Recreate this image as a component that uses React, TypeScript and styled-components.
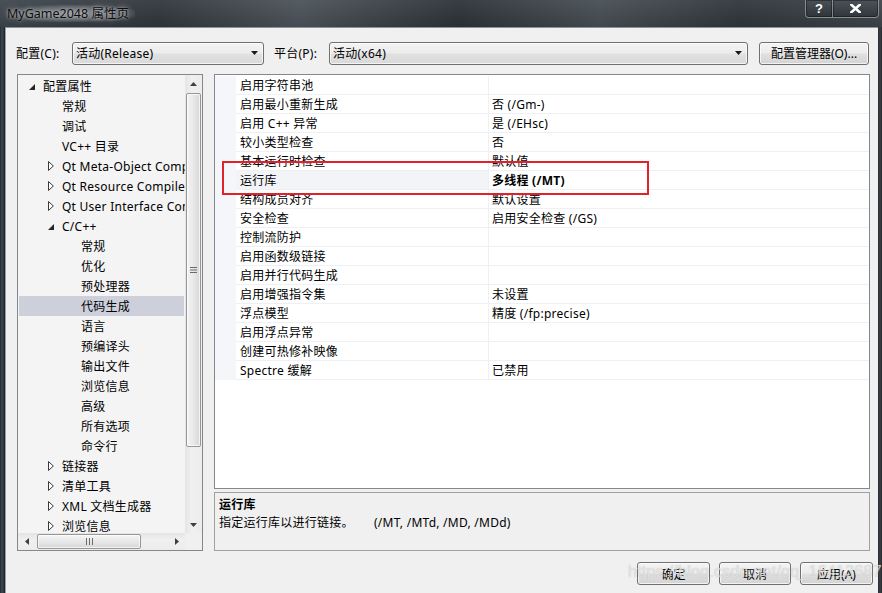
import React from "react";
import styled, { createGlobalStyle } from "styled-components";

const FONT = `"Noto Sans", "Noto Sans CJK SC", sans-serif`;

const GlobalStyle = createGlobalStyle`
  html, body { margin: 0; padding: 0; background: #2a2f34; }
  body { font-family: ${FONT}; font-size: 12px; color: #000; letter-spacing: 0.25px; }
  * { box-sizing: border-box; }
`;

const Window = styled.div`
  position: relative;
  width: 882px;
  height: 593px;
  overflow: hidden;
  display: flex;
  flex-direction: column;
  background: linear-gradient(90deg, #23282c 0px, #3c4c5a 2px, #1d2125 5px, #1d2125 877px, #3a4046 880px, #262a2e 882px);
`;

const TitleBar = styled.div`
  height: 27px;
  flex: 0 0 27px;
  display: flex;
  align-items: flex-start;
  background:
    linear-gradient(180deg, rgba(255,255,255,0.06), rgba(0,0,0,0.08)),
    linear-gradient(90deg, #3e454c 0%, #30363c 18%, #4b5259 34%, #2c3237 52%, #464d54 68%, #2f353a 84%, #3d444a 100%);
`;

const Title = styled.div`
  margin: 5px 0 0 7px;
  padding: 0 6px 0 0;
  font-size: 12.5px;
  letter-spacing: 0;
  line-height: 17px;
  color: #0c0c0c;
  background: radial-gradient(ellipse at center, rgba(190,196,201,0.55) 0%, rgba(150,158,164,0.35) 55%, rgba(120,128,134,0) 80%);
  text-shadow: 0 0 6px rgba(255,255,255,0.55), 0 0 3px rgba(255,255,255,0.45);
`;

const CaptionButtons = styled.div`
  margin-left: auto;
  margin-right: 3px;
  display: flex;
`;

const CaptionButton = styled.div<{ $w: number; $first?: boolean }>`
  width: ${(p) => p.$w}px;
  height: 18px;
  display: flex;
  align-items: center;
  justify-content: center;
  border: 1px solid rgba(190, 198, 206, 0.55);
  border-top: none;
  border-left: ${(p) => (p.$first ? "1px solid rgba(190,198,206,0.55)" : "none")};
  border-radius: ${(p) => (p.$first ? "0 0 0 4px" : "0 0 4px 0")};
  background: linear-gradient(180deg, rgba(80,88,96,0.55), rgba(40,46,52,0.6));
  box-shadow: inset 0 0 0 1px rgba(0,0,0,0.35);
  color: #fff;
  font-family: "Liberation Sans", sans-serif;
  font-weight: bold;
  font-size: 13px;
  line-height: 1;
`;

const Client = styled.div`
  flex: 1;
  margin: 0 4px 0 5px;
  background: #f0f0f0;
  border-top: 1px solid #8a9197;
  border-left: 1px solid #9aa0a6;
  display: flex;
  flex-direction: column;
`;

const TopRow = styled.div`
  display: flex;
  align-items: center;
  padding: 13px 0 0 10px;
  height: 37px;
`;

const Label = styled.div<{ $w: number; $ml?: number }>`
  width: ${(p) => p.$w}px;
  margin-left: ${(p) => p.$ml ?? 0}px;
  line-height: 23px;
`;

const Combo = styled.div<{ $w: number }>`
  width: ${(p) => p.$w}px;
  height: 23px;
  display: flex;
  align-items: center;
  padding: 0 0 0 3px;
  border: 1px solid #707070;
  border-radius: 3px;
  background: linear-gradient(180deg, #f4f4f4 0%, #ececec 48%, #e1e1e1 52%, #d9d9d9 100%);
  box-shadow: inset 0 0 0 1px rgba(255,255,255,0.7);
`;

const ComboText = styled.div`
  flex: 1;
  white-space: nowrap;
  overflow: hidden;
`;

const ComboArrow = styled.div`
  width: 18px;
  display: flex;
  justify-content: center;
`;

const WinButton = styled.div<{ $w: number; $ml?: number }>`
  width: ${(p) => p.$w}px;
  margin-left: ${(p) => p.$ml ?? 0}px;
  height: 23px;
  display: flex;
  align-items: center;
  justify-content: center;
  border: 1px solid #707070;
  border-radius: 3px;
  background: linear-gradient(180deg, #f4f4f4 0%, #ececec 48%, #e0e0e0 52%, #d4d4d4 100%);
  box-shadow: inset 0 0 0 1px rgba(255,255,255,0.7);
  white-space: nowrap;
  letter-spacing: 0;
`;

const Main = styled.div`
  display: flex;
  margin-top: 9px;
  padding-left: 11px;
  height: 477px;
`;

const Tree = styled.div`
  width: 186px;
  height: 477px;
  border: 1px solid #828790;
  background: #f4f4f4;
  display: grid;
  grid-template-columns: 1fr 17px;
  grid-template-rows: 1fr 17px;
`;

const TreeList = styled.div`
  overflow: hidden;
  padding-top: 1px;
`;

const TreeRow = styled.div<{ $level: number; $selected?: boolean }>`
  height: 20px;
  margin: 0 1px;
  display: flex;
  align-items: center;
  padding-left: ${(p) => 7 + p.$level * 19}px;
  white-space: nowrap;
  background: ${(p) => (p.$selected ? "#cdd0db" : "transparent")};
`;

const Expander = styled.div`
  width: 17px;
  flex: 0 0 17px;
  display: flex;
  align-items: center;
  padding-left: 3px;
  height: 20px;
`;

const VScroll = styled.div`
  display: flex;
  flex-direction: column;
  background: linear-gradient(90deg, #e4e4e4, #f0f0f0 40%, #ececec);
`;

const HScroll = styled.div`
  display: flex;
  background: linear-gradient(180deg, #e4e4e4, #f0f0f0 40%, #ececec);
`;

const Corner = styled.div`
  background: #f0f0f0;
`;

const ScrollArrow = styled.div`
  width: 17px;
  height: 17px;
  flex: 0 0 17px;
  display: flex;
  align-items: center;
  justify-content: center;
`;

const VThumb = styled.div`
  margin: 1px 1px 0 1px;
  height: 354px;
  border: 1px solid #979797;
  border-radius: 2px;
  background: linear-gradient(90deg, #f4f4f4 0%, #e8e8e8 50%, #d6d6d6 100%);
  box-shadow: inset 0 0 0 1px rgba(255,255,255,0.7);
  display: flex;
  align-items: center;
  justify-content: center;
`;

const HThumb = styled.div`
  margin: 1px 0 1px 2px;
  width: 104px;
  border: 1px solid #979797;
  border-radius: 2px;
  background: linear-gradient(180deg, #f4f4f4 0%, #e8e8e8 50%, #d6d6d6 100%);
  box-shadow: inset 0 0 0 1px rgba(255,255,255,0.7);
  display: flex;
  align-items: center;
  justify-content: center;
`;

const Spacer = styled.div`
  flex: 1;
`;

const RightCol = styled.div`
  margin-left: 11px;
  width: 656px;
  display: flex;
  flex-direction: column;
  gap: 3px;
`;

const Grid = styled.div`
  position: relative;
  height: 415px;
  padding-top: 1px;
  border: 1px solid #828790;
  background: #fff;
`;

const PropRow = styled.div`
  display: grid;
  grid-template-columns: 21px 253px 1fr;
  height: 19px;
`;

const Gutter = styled.div`
  background: #f4f6f9;
`;

const NameCell = styled.div<{ $selected?: boolean }>`
  padding: 1px 0 0 4px;
  line-height: 17px;
  border-right: 1px solid #eef0f4;
  border-bottom: 1px solid #eef0f4;
  background: ${(p) => (p.$selected ? "#f2f4f8" : "#fff")};
  white-space: nowrap;
  overflow: hidden;
`;

const ValueCell = styled.div<{ $bold?: boolean }>`
  padding: 1px 0 0 3px;
  line-height: 17px;
  border-bottom: 1px solid #eef0f4;
  font-weight: ${(p) => (p.$bold ? "bold" : "normal")};
  white-space: nowrap;
  overflow: hidden;
`;

const Highlight = styled.div`
  position: absolute;
  left: 7px;
  top: 86px;
  width: 427px;
  height: 34px;
  border: 2px solid #e2222b;
  pointer-events: none;
`;

const Desc = styled.div`
  height: 59px;
  border: 1px solid #a0a0a0;
  background: #f0f0f0;
  padding: 3px 4px;
`;

const DescTitle = styled.div`
  font-weight: bold;
  line-height: 18px;
`;

const DescText = styled.div`
  line-height: 18px;
  white-space: pre;
`;

const ButtonRow = styled.div`
  display: flex;
  justify-content: flex-end;
  gap: 9px;
  padding: 11px 5px 0 0;
`;

const Watermark = styled.div`
  position: absolute;
  left: 628px;
  top: 563px;
  font-family: "Liberation Sans", sans-serif;
  font-size: 16px;
  color: rgba(240, 240, 240, 0.7);
  text-shadow: 0 0 1px rgba(140,140,140,0.5);
  pointer-events: none;
  white-space: nowrap;
`;

const DownTri = ({ c = "#1a1a1a" }: { c?: string }) => (
  <svg width="7" height="4" viewBox="0 0 7 4"><polygon points="0,0 7,0 3.5,4" fill={c} /></svg>
);
const UpTri = () => (
  <svg width="7" height="4" viewBox="0 0 7 4"><polygon points="0,4 7,4 3.5,0" fill="#404040" /></svg>
);
const LeftTri = () => (
  <svg width="4" height="7" viewBox="0 0 4 7"><polygon points="4,0 4,7 0,3.5" fill="#404040" /></svg>
);
const RightTri = () => (
  <svg width="4" height="7" viewBox="0 0 4 7"><polygon points="0,0 0,7 4,3.5" fill="#404040" /></svg>
);
const Expanded = () => (
  <svg width="6" height="6" viewBox="0 0 6 6" style={{ marginTop: 2 }}><polygon points="6,0 6,6 0,6" fill="#262626" /></svg>
);
const Collapsed = () => (
  <svg width="6" height="10" viewBox="0 0 6 10"><polygon points="0.5,0.5 5.3,5 0.5,9.5" fill="#fff" stroke="#3a3a3a" strokeWidth="1" /></svg>
);
const VGrip = () => (
  <svg width="7" height="6" viewBox="0 0 7 6">
    <rect x="0" y="0" width="7" height="1" fill="#6a6a6a" />
    <rect x="0" y="2.5" width="7" height="1" fill="#6a6a6a" />
    <rect x="0" y="5" width="7" height="1" fill="#6a6a6a" />
  </svg>
);
const HGrip = () => (
  <svg width="7" height="7" viewBox="0 0 7 7">
    <rect x="0" y="0" width="1" height="7" fill="#6a6a6a" />
    <rect x="3" y="0" width="1" height="7" fill="#6a6a6a" />
    <rect x="6" y="0" width="1" height="7" fill="#6a6a6a" />
  </svg>
);
const CloseX = () => (
  <svg width="11" height="9" viewBox="0 0 11 9">
    <path d="M1 0.5 L10 8.5 M10 0.5 L1 8.5" stroke="#fff" strokeWidth="2.6" strokeLinecap="square" />
  </svg>
);

type TreeItem = { level: number; text: string; arrow?: "open" | "closed"; selected?: boolean };

const treeItems: TreeItem[] = [
  { level: 0, text: "配置属性", arrow: "open" },
  { level: 1, text: "常规" },
  { level: 1, text: "调试" },
  { level: 1, text: "VC++ 目录" },
  { level: 1, text: "Qt Meta-Object Compiler", arrow: "closed" },
  { level: 1, text: "Qt Resource Compiler", arrow: "closed" },
  { level: 1, text: "Qt User Interface Compiler", arrow: "closed" },
  { level: 1, text: "C/C++", arrow: "open" },
  { level: 2, text: "常规" },
  { level: 2, text: "优化" },
  { level: 2, text: "预处理器" },
  { level: 2, text: "代码生成", selected: true },
  { level: 2, text: "语言" },
  { level: 2, text: "预编译头" },
  { level: 2, text: "输出文件" },
  { level: 2, text: "浏览信息" },
  { level: 2, text: "高级" },
  { level: 2, text: "所有选项" },
  { level: 2, text: "命令行" },
  { level: 1, text: "链接器", arrow: "closed" },
  { level: 1, text: "清单工具", arrow: "closed" },
  { level: 1, text: "XML 文档生成器", arrow: "closed" },
  { level: 1, text: "浏览信息", arrow: "closed" },
];

type Prop = { name: string; value: string; selected?: boolean };

const props: Prop[] = [
  { name: "启用字符串池", value: "" },
  { name: "启用最小重新生成", value: "否 (/Gm-)" },
  { name: "启用 C++ 异常", value: "是 (/EHsc)" },
  { name: "较小类型检查", value: "否" },
  { name: "基本运行时检查", value: "默认值" },
  { name: "运行库", value: "多线程 (/MT)", selected: true },
  { name: "结构成员对齐", value: "默认设置" },
  { name: "安全检查", value: "启用安全检查 (/GS)" },
  { name: "控制流防护", value: "" },
  { name: "启用函数级链接", value: "" },
  { name: "启用并行代码生成", value: "" },
  { name: "启用增强指令集", value: "未设置" },
  { name: "浮点模型", value: "精度 (/fp:precise)" },
  { name: "启用浮点异常", value: "" },
  { name: "创建可热修补映像", value: "" },
  { name: "Spectre 缓解", value: "已禁用" },
];

export default function App() {
  return (
    <>
      <GlobalStyle />
      <Window>
        <TitleBar>
          <Title>MyGame2048 属性页</Title>
          <CaptionButtons>
            <CaptionButton $w={28} $first>?</CaptionButton>
            <CaptionButton $w={46}><CloseX /></CaptionButton>
          </CaptionButtons>
        </TitleBar>
        <Client>
          <TopRow>
            <Label $w={56}>配置(C):</Label>
            <Combo $w={192}>
              <ComboText>活动(Release)</ComboText>
              <ComboArrow><DownTri /></ComboArrow>
            </Combo>
            <Label $w={55} $ml={10}>平台(P):</Label>
            <Combo $w={419}>
              <ComboText>活动(x64)</ComboText>
              <ComboArrow><DownTri /></ComboArrow>
            </Combo>
            <WinButton $w={110} $ml={11}>配置管理器(O)...</WinButton>
          </TopRow>
          <Main>
            <Tree>
              <TreeList>
                {treeItems.map((t, i) => (
                  <TreeRow key={i} $level={t.level} $selected={t.selected}>
                    <Expander>
                      {t.arrow === "open" && <Expanded />}
                      {t.arrow === "closed" && <Collapsed />}
                    </Expander>
                    {t.text}
                  </TreeRow>
                ))}
              </TreeList>
              <VScroll>
                <ScrollArrow><UpTri /></ScrollArrow>
                <VThumb><VGrip /></VThumb>
                <Spacer />
                <ScrollArrow><DownTri c="#404040" /></ScrollArrow>
              </VScroll>
              <HScroll>
                <ScrollArrow><LeftTri /></ScrollArrow>
                <HThumb><HGrip /></HThumb>
                <Spacer />
                <ScrollArrow><RightTri /></ScrollArrow>
              </HScroll>
              <Corner />
            </Tree>
            <RightCol>
              <Grid>
                {props.map((p, i) => (
                  <PropRow key={i}>
                    <Gutter />
                    <NameCell $selected={p.selected}>{p.name}</NameCell>
                    <ValueCell $bold={p.selected}>{p.value}</ValueCell>
                  </PropRow>
                ))}
                <Highlight />
              </Grid>
              <Desc>
                <DescTitle>运行库</DescTitle>
                <DescText>{"指定运行库以进行链接。      (/MT, /MTd, /MD, /MDd)"}</DescText>
              </Desc>
            </RightCol>
          </Main>
          <ButtonRow>
            <WinButton $w={73}>确定</WinButton>
            <WinButton $w={72}>取消</WinButton>
            <WinButton $w={73}>应用(A)</WinButton>
          </ButtonRow>
        </Client>
        <Watermark>https://blog.csdn.net/qq_16413687</Watermark>
      </Window>
    </>
  );
}
